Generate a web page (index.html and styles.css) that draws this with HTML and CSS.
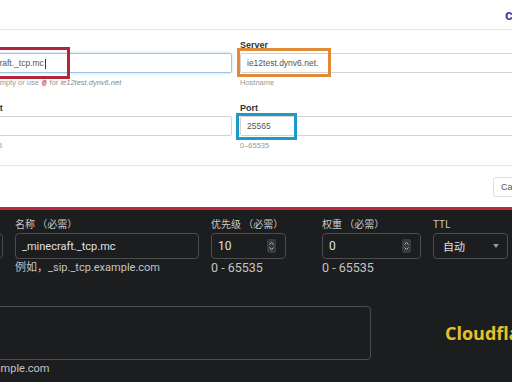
FILE: index.html
```html
<!DOCTYPE html>
<html lang="en">
<head>
    <meta charset="UTF-8">
    <meta name="viewport" content="width=device-width, initial-scale=1.0">
    <title>SRV record</title>
    <link rel="stylesheet" href="styles.css">
</head>
<body>
    <div class="dyn">
        <div class="dyn-head"><span class="dyn-logo">c</span></div>

        <div class="dyn-form">
            <div class="field">
                <label>Name</label>
                <div class="text focused">_minecraft._tcp.mc<i class="cursor"></i></div>
                <p class="help">Leave empty or use <code>@</code> for <em>ie12test.dynv6.net</em></p>
            </div>
            <div class="field">
                <label>Server</label>
                <div class="text">ie12test.dynv6.net.</div>
                <p class="help">Hostname</p>
            </div>
            <div class="field">
                <label>Weight</label>
                <div class="text">0</div>
                <p class="help">0–65535</p>
            </div>
            <div class="field">
                <label>Port</label>
                <div class="text">25565</div>
                <p class="help">0–65535</p>
            </div>
        </div>

        <div class="dyn-foot">
            <button class="btn">Cancel</button>
        </div>
    </div>

    <div class="cf">
        <div class="cf-row">
            <div class="cf-field">
                <label>类型</label>
                <div class="cf-select"><span>SRV</span><i class="caret"></i></div>
            </div>
            <div class="cf-field">
                <label>名称 （必需）</label>
                <input class="cf-input" type="text" value="_minecraft._tcp.mc">
                <p class="cf-help">例如，_sip._tcp.example.com</p>
            </div>
            <div class="cf-field">
                <label>优先级 （必需）</label>
                <div class="cf-num narrow">
                    <input type="text" value="10">
                    <span class="spin"><svg width="9" height="14" viewBox="0 0 9 14"><path d="M2.5 5.5 4.5 3.5 6.5 5.5M2.5 8.5 4.5 10.5 6.5 8.5" fill="none" stroke="#b8b8b8" stroke-width="1"/></svg></span>
                </div>
                <p class="cf-help num">0 - 65535</p>
            </div>
            <div class="cf-field">
                <label>权重 （必需）</label>
                <div class="cf-num">
                    <input type="text" value="0">
                    <span class="spin"><svg width="9" height="14" viewBox="0 0 9 14"><path d="M2.5 5.5 4.5 3.5 6.5 5.5M2.5 8.5 4.5 10.5 6.5 8.5" fill="none" stroke="#b8b8b8" stroke-width="1"/></svg></span>
                </div>
                <p class="cf-help num">0 - 65535</p>
            </div>
            <div class="cf-field">
                <label>TTL</label>
                <div class="cf-select"><span>自动</span><i class="caret"></i></div>
            </div>
        </div>

        <div class="cf-row2">
            <div class="cf-target">
                <label>目标 （必需）</label>
                <textarea class="cf-area"></textarea>
                <p class="cf-help">例如，mc.example.com</p>
            </div>
            <div class="cf-brand">Cloudflare</div>
        </div>
    </div>

    <!-- annotation boxes drawn over the screenshot -->
    <span class="mark mark-red"></span>
    <span class="mark mark-orange"></span>
    <span class="mark mark-blue"></span>
</body>
</html>
```

FILE: styles.css
```css
* {
    box-sizing: border-box;
    margin: 0;
    padding: 0;
}
html, body {
    overflow: hidden;
}
body {
    width: 512px;
    height: 384px;
    position: relative;
    background-color: #fff;
    font-family: "Liberation Sans", Arial, sans-serif;
}

/* top: dynv6 dialog */
.dyn {
    margin-left: -27px;
    width: 600px;
}
.dyn-head {
    height: 30px;
    border-bottom: 1px solid #e6e6e6;
    padding: 6px 0 0 532px;
}
.dyn-logo {
    font-size: 14px;
    line-height: 18px;
    font-weight: bold;
    color: #3546a3;
}
.dyn-form {
    display: grid;
    grid-template-columns: 259px 1fr;
    column-gap: 8px;
    row-gap: 15px;
    padding: 10px 0 14px;
    border-bottom: 1px solid #e6e6e6;
}
.field label {
    display: block;
    font-size: 9px;
    line-height: 11px;
    font-weight: bold;
    color: #333;
    margin-bottom: 2px;
}
.text {
    height: 20px;
    padding: 0 6px;
    border: 1px solid #d4d4d4;
    border-radius: 2px;
    font-size: 8.5px;
    line-height: 18px;
    color: #555;
    background: #fff;
    white-space: nowrap;
    overflow: hidden;
}
.text.focused {
    border-color: #9fc4e7;
    box-shadow: 0 0 3px rgba(102, 175, 233, 0.5);
    text-indent: -8px;
}
.cursor {
    display: inline-block;
    vertical-align: middle;
    width: 1px;
    height: 10px;
    margin-left: 1px;
    background: #333;
}
.help {
    margin-top: 5px;
    font-size: 7.5px;
    line-height: 10px;
    color: #999;
    white-space: nowrap;
}
.help code {
    font-family: "Liberation Mono", monospace;
    font-size: 7.5px;
    color: #c7254e;
    background: #f9f2f4;
    padding: 0 1px;
    border-radius: 2px;
}
.help em {
    color: #888;
}
.dyn-foot {
    padding: 10px 0 10px 520px;
}
.btn {
    height: 20px;
    padding: 0 7px;
    border: 1px solid #ddd;
    border-radius: 3px;
    background: #fff;
    font-family: "Liberation Sans", Arial, sans-serif;
    font-size: 9px;
    color: #555;
}

/* bottom: cloudflare form */
.cf {
    margin-left: -77px;
    width: 620px;
    height: 175px;
    background-color: #1c1d1f;
    border-top: 3px solid #c0283b;
    padding-top: 7px;
    font-family: Roboto, "Noto Sans CJK SC", sans-serif;
}
.cf-row {
    display: grid;
    grid-template-columns: 80px 184px 99px 99px 75px;
    column-gap: 12px;
}
.cf label {
    display: block;
    font-family: "Noto Sans CJK SC", sans-serif;
    font-size: 10px;
    line-height: 14px;
    color: #c9c9c9;
    margin-bottom: 2px;
    white-space: nowrap;
}
.cf-input,
.cf-num,
.cf-select {
    height: 26px;
    border: 1px solid #4c4d51;
    border-radius: 4px;
    background: #1c1d1f;
}
.cf-input {
    display: block;
    width: 100%;
    padding: 0 6px;
    font-family: Roboto, "Noto Sans CJK SC", sans-serif;
    font-size: 11px;
    color: #e0e0e0;
    outline: none;
}
.cf-num {
    display: flex;
    align-items: center;
    padding: 0 9px 0 6px;
}
.cf-num.narrow {
    width: 75px;
}
.cf-num input {
    flex: 1;
    min-width: 0;
    border: none;
    background: transparent;
    font-family: Roboto, "Noto Sans CJK SC", sans-serif;
    font-size: 12px;
    color: #e0e0e0;
    outline: none;
}
.spin {
    display: flex;
    width: 9px;
    height: 14px;
    background: #393a3e;
    border-radius: 2px;
}
.cf-select {
    display: flex;
    align-items: center;
    justify-content: space-between;
    padding: 0 8px 0 9px;
    font-family: "Noto Sans CJK SC", sans-serif;
    font-size: 11px;
    color: #e0e0e0;
}
.caret {
    width: 0;
    height: 0;
    border-left: 3.5px solid transparent;
    border-right: 3.5px solid transparent;
    border-top: 4px solid #9a9a9a;
}
.cf-help {
    margin-top: 2px;
    font-size: 11px;
    line-height: 14px;
    color: #c4c4c4;
    white-space: nowrap;
}
.cf-help.num {
    font-size: 12.5px;
}
.cf-row2 {
    display: flex;
    margin-top: 15px;
}
.cf-target {
    width: 439px;
    margin-left: 9px;
}
.cf-area {
    display: block;
    width: 100%;
    height: 54px;
    border: 1px solid #4c4d51;
    border-radius: 4px;
    background: #1c1d1f;
    resize: none;
}
.cf-brand {
    margin: 16px 0 0 74px;
    line-height: 54px;
    font-family: "Open Sans", sans-serif;
    font-size: 18px;
    font-weight: bold;
    color: #e6c12b;
    white-space: nowrap;
}

/* annotation frames */
.mark {
    position: absolute;
    border: 3px solid;
}
.mark-red {
    left: -10px;
    top: 47px;
    width: 80px;
    height: 32px;
    border-color: #b3263a;
}
.mark-orange {
    left: 237px;
    top: 48px;
    width: 94px;
    height: 29px;
    border-color: #e08936;
}
.mark-blue {
    left: 236px;
    top: 113px;
    width: 61px;
    height: 27px;
    border-color: #1d9ac5;
}
```
